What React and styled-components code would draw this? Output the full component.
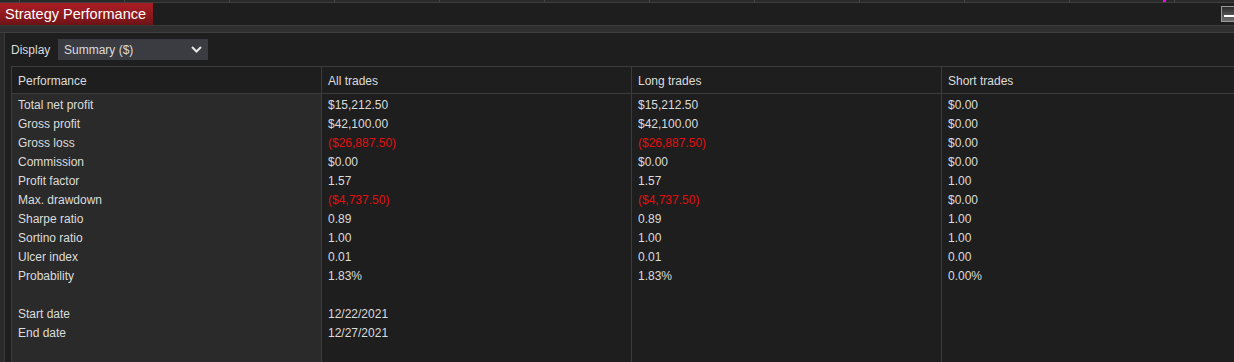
import styled, { createGlobalStyle } from "styled-components";

const GlobalStyle = createGlobalStyle`
  html, body {
    margin: 0;
    padding: 0;
    background: #1e1e1e;
  }
  body {
    font-family: "Liberation Sans", Arial, sans-serif;
    font-size: 12px;
    color: #dcdcdc;
  }
`;

const rows = [
  { label: "Total net profit", all: "$15,212.50", long: "$15,212.50", short: "$0.00" },
  { label: "Gross profit", all: "$42,100.00", long: "$42,100.00", short: "$0.00" },
  { label: "Gross loss", all: "($26,887.50)", long: "($26,887.50)", short: "$0.00", red: true },
  { label: "Commission", all: "$0.00", long: "$0.00", short: "$0.00" },
  { label: "Profit factor", all: "1.57", long: "1.57", short: "1.00" },
  { label: "Max. drawdown", all: "($4,737.50)", long: "($4,737.50)", short: "$0.00", red: true },
  { label: "Sharpe ratio", all: "0.89", long: "0.89", short: "1.00" },
  { label: "Sortino ratio", all: "1.00", long: "1.00", short: "1.00" },
  { label: "Ulcer index", all: "0.01", long: "0.01", short: "0.00" },
  { label: "Probability", all: "1.83%", long: "1.83%", short: "0.00%" },
  { label: "", all: "", long: "", short: "" },
  { label: "Start date", all: "12/22/2021", long: "", short: "" },
  { label: "End date", all: "12/27/2021", long: "", short: "" },
];

const columns = [
  { title: "Performance", key: "label", shaded: true },
  { title: "All trades", key: "all" },
  { title: "Long trades", key: "long" },
  { title: "Short trades", key: "short" },
];

export default function App() {
  return (
    <>
      <GlobalStyle />
      <Page>
        <TopStrip>
          {Array.from({ length: 12 }).map((_, i) => (
            <StripCell key={i} first={i === 0} />
          ))}
          <Marker />
        </TopStrip>

        <TitleBar>
          <Tab>Strategy Performance</Tab>
          <MinButton>
            <MinBar />
          </MinButton>
        </TitleBar>

        <Band />

        <Content>
          <DisplayRow>
            <Label>Display</Label>
            <Select>
              <span>Summary ($)</span>
              <svg width="11" height="7" viewBox="0 0 11 7">
                <path d="M1 1 L5.5 5.5 L10 1" fill="none" stroke="#e6e6e6" strokeWidth="2" />
              </svg>
            </Select>
          </DisplayRow>

          <Table>
            {columns.map((col, i) => (
              <Column key={col.key} last={i === columns.length - 1}>
                <HeaderCell>{col.title}</HeaderCell>
                <Body shaded={col.shaded}>
                  {rows.map((r, j) => (
                    <Cell key={j} red={r.red && col.key !== "label" && col.key !== "short"}>
                      {r[col.key]}
                    </Cell>
                  ))}
                </Body>
              </Column>
            ))}
          </Table>
        </Content>
      </Page>
    </>
  );
}

const Page = styled.div`
  width: 1234px;
  height: 362px;
  overflow: hidden;
  display: flex;
  flex-direction: column;
  background: #1e1e1e;
`;

const TopStrip = styled.div`
  position: relative;
  display: flex;
  height: 2px;
  background: #2a2a2a;
  border-bottom: 1px solid #3e3e3e;
  flex-shrink: 0;
`;

const StripCell = styled.div`
  width: ${(p) => (p.first ? "20px" : "105px")};
  flex-shrink: 0;
  border-right: 1px solid #444;
  box-sizing: border-box;
`;

const Marker = styled.div`
  position: absolute;
  left: 1163px;
  top: 0;
  width: 3px;
  height: 2px;
  background: #ff00ff;
`;

const TitleBar = styled.div`
  display: flex;
  align-items: stretch;
  justify-content: space-between;
  height: 22px;
  background: #1e1e1e;
  flex-shrink: 0;
`;

const Tab = styled.div`
  display: flex;
  align-items: center;
  width: 153px;
  box-sizing: border-box;
  padding-left: 5px;
  background: linear-gradient(to bottom, #a81d24 0%, #8c181d 60%, #6a1317 100%);
  color: #ffffff;
  font-size: 14.5px;
  white-space: nowrap;
`;

const MinButton = styled.div`
  align-self: flex-start;
  margin-top: 3px;
  width: 13px;
  height: 16px;
  box-sizing: border-box;
  border: 1px solid #9a9a9a;
  border-right: none;
  background: linear-gradient(to bottom, #2c2c2c 0%, #6e6e6e 100%);
  display: flex;
  align-items: flex-end;
  justify-content: flex-end;
  padding-bottom: 4px;
`;

const MinBar = styled.div`
  width: 10px;
  height: 2px;
  background: #ffffff;
`;

const Band = styled.div`
  height: 6px;
  background: #2f2f2f;
  border-top: 1px solid #3a3a3a;
  border-bottom: 1px solid #3e3e3e;
  flex-shrink: 0;
`;

const Content = styled.div`
  flex: 1;
  display: flex;
  flex-direction: column;
  margin-left: 4px;
  border-left: 1px solid #3a3a3a;
  padding: 6px 0 0 6px;
  background: #1e1e1e;
  box-shadow: -4px 0 0 #2a2a2a;
  min-height: 0;
`;

const DisplayRow = styled.div`
  display: flex;
  align-items: center;
  gap: 6px;
  height: 21px;
  flex-shrink: 0;
`;

const Label = styled.span`
  width: 41px;
  color: #dcdcdc;
  padding-top: 1px;
`;

const Select = styled.div`
  width: 150px;
  height: 21px;
  box-sizing: border-box;
  display: flex;
  align-items: center;
  justify-content: space-between;
  padding: 1px 6px 0 6px;
  background: #3b3b42;
  color: #dcdcdc;

  svg {
    margin-top: -1px;
  }
`;

const Table = styled.div`
  flex: 1;
  margin-top: 6px;
  display: grid;
  grid-template-columns: 310px 310px 310px 320px;
  border-top: 1px solid #3c3c3c;
  border-left: 1px solid #3c3c3c;
  min-height: 0;
`;

const Column = styled.div`
  display: flex;
  flex-direction: column;
  border-right: ${(p) => (p.last ? "none" : "1px solid #3c3c3c")};
  min-width: 0;
`;

const HeaderCell = styled.div`
  height: 27px;
  display: flex;
  align-items: center;
  padding: 1px 6px 0;
  box-sizing: border-box;
  border-bottom: 1px solid #3c3c3c;
  background: #1e1e1e;
  color: #dcdcdc;
  flex-shrink: 0;
`;

const Body = styled.div`
  flex: 1;
  background: ${(p) => (p.shaded ? "#2a2a2a" : "#1e1e1e")};
  padding-top: 2px;
`;

const Cell = styled.div`
  height: 19px;
  line-height: 19px;
  padding: 0 6px;
  white-space: nowrap;
  color: ${(p) => (p.red ? "#e01010" : "#dcdcdc")};
`;
